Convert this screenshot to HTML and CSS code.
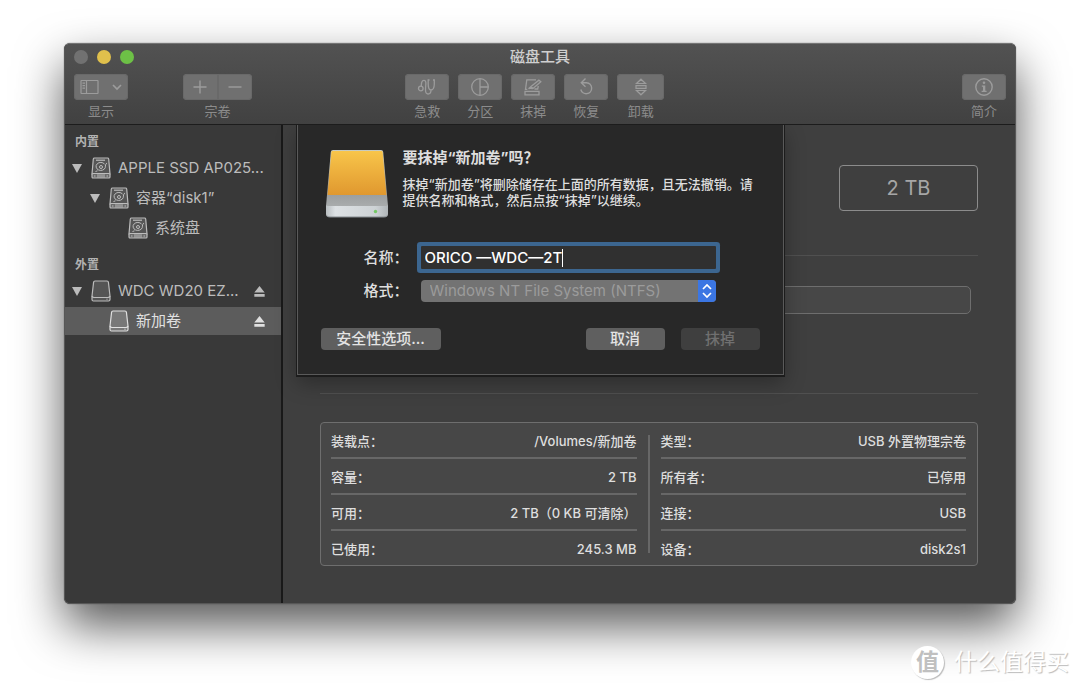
FILE: index.html
```html
<!DOCTYPE html>
<html lang="zh-CN">
<head>
<meta charset="utf-8">
<meta name="viewport" content="width=device-width, initial-scale=1">
<title>磁盘工具</title>
<link rel="stylesheet" href="styles.css">
</head>
<body>
<svg class="symbols" aria-hidden="true">
  <symbol id="internal-disk" viewBox="0 0 20 22">
    <path d="M3.500 1h13q1 0 1.200 1L19 17H1L2.300 2q.2-1 1.200-1z" fill="#565656" stroke="currentColor" stroke-width="1.200"/>
    <rect x="1" y="16.500" width="18" height="4.500" rx="1" fill="#6a6a6a" stroke="currentColor" stroke-width="1.200"/>
    <path d="M5 3.200h9" stroke="currentColor" stroke-width="1.200"/>
    <path d="M13.500 7a4.700 4 0 1 0 .8 3.500c.2-2 0-3.500 1.700-4.500M6.500 13.800l-2 .7" fill="none" stroke="currentColor"/>
    <circle cx="10" cy="10" r="1.500" fill="none" stroke="currentColor"/>
    <path d="M3 19h1.500M7 17.200v3.500M9 17.200v3.500M11 17.200v3.500M13 17.200v3.500M15.500 19h1.500" stroke="currentColor"/>
  </symbol>
  <symbol id="external-disk" viewBox="0 0 20 22">
    <path d="M4 1h12q1.200 0 1.400 1.200L19 16v3.500q0 1.500-1.500 1.500h-15Q1 21 1 19.500V16L2.600 2.200Q2.800 1 4 1z" fill="currentColor" fill-opacity=".22" stroke="currentColor" stroke-width="1.200"/>
    <path d="M1 16q.4 1.500 2 1.500h14q1.600 0 2-1.500" fill="none" stroke="currentColor" stroke-width="1.200"/>
    <circle cx="16" cy="19.200" r=".6" fill="currentColor"/>
  </symbol>
  <symbol id="eject" viewBox="0 0 10 10">
    <path d="M5 0l4.700 5.800H.3zM.3 7.300h9.400v2.400H.3z" fill="currentColor"/>
  </symbol>
  <symbol id="triangle" viewBox="0 0 10 9">
    <path d="M0 0h10L5 9z" fill="currentColor"/>
  </symbol>
</svg>

<div class="window">
  <header class="header">
    <div class="titlebar">
      <div class="lights">
        <button class="light light-close" aria-label="关闭"></button>
        <button class="light light-minimize" aria-label="最小化"></button>
        <button class="light light-zoom" aria-label="缩放"></button>
      </div>
      <h1 class="title">磁盘工具</h1>
    </div>
    <div class="toolbar">
      <div class="tool tool-view">
        <button class="tool-button" aria-labelledby="t-view">
          <svg width="42" height="18" viewBox="0 0 42 18"><g fill="none" stroke="currentColor" stroke-width="1.200"><rect x="1" y="2.500" width="17" height="13" rx=".5"/><path d="M6.500 2.500v13M2.500 5.200H5M2.500 7.700H5M2.500 10.200H5"/><path d="M33 7l4 4 4-4" stroke-width="1.700"/></g></svg>
        </button>
        <span class="tool-label" id="t-view">显示</span>
      </div>
      <div class="tool tool-volume">
        <div class="segments">
          <button class="tool-button" aria-label="添加宗卷"><svg width="14" height="14" viewBox="0 0 14 14"><path d="M7 .5v13M.5 7h13" stroke="currentColor" stroke-width="1.400"/></svg></button>
          <button class="tool-button" aria-label="移除宗卷"><svg width="14" height="14" viewBox="0 0 14 14"><path d="M.5 7h13" stroke="currentColor" stroke-width="1.400"/></svg></button>
        </div>
        <span class="tool-label">宗卷</span>
      </div>
      <div class="space-left"></div>
      <div class="tool-group">
        <div class="tool">
          <button class="tool-button" aria-labelledby="t-aid"><svg width="20" height="18" viewBox="0 0 20 18"><g fill="none" stroke="currentColor" stroke-width="1.300"><circle cx="3.800" cy="10.500" r="2.300"/><path d="M4.300 8.200C4.300 5 4.800 2.300 7 2.300S9 5 8.700 8c-.4 4-.6 8 2.300 8 2.500 0 3-1.500 3-4M12.500 2h-1.300v4c0 3.500 1 6 2.800 6s3.300-2.500 3.300-6V2H16"/></g></svg></button>
          <span class="tool-label" id="t-aid">急救</span>
        </div>
        <div class="tool">
          <button class="tool-button" aria-labelledby="t-part"><svg width="20" height="20" viewBox="0 0 20 20"><g fill="none" stroke="currentColor" stroke-width="1.300"><circle cx="10" cy="10" r="8.300"/><path d="M10 1.700v16.600M10 10h8.300"/></g></svg></button>
          <span class="tool-label" id="t-part">分区</span>
        </div>
        <div class="tool">
          <button class="tool-button" aria-labelledby="t-erase"><svg width="20" height="18" viewBox="0 0 20 18"><g fill="none" stroke="currentColor" stroke-width="1.300"><path d="M13 1.800H3.800l-1.300 9.500h1.800M2 13.300h14v3.500H2zM5.500 10.700c2.500-1 2.500.4 4.500-.2L17.800 3.700l-1.900-1.500L8 8.500zM8 8.500l2 2M11.500 11h3.200l.6-3"/></g></svg></button>
          <span class="tool-label" id="t-erase">抹掉</span>
        </div>
        <div class="tool">
          <button class="tool-button" aria-labelledby="t-restore"><svg width="18" height="20" viewBox="0 0 18 20"><path d="M8.500 1.500L4.300 5.700l4.200 4M4.300 5.700h5.200a5.500 5.500 0 1 1-5.700 6.800" fill="none" stroke="currentColor" stroke-width="1.400"/></svg></button>
          <span class="tool-label" id="t-restore">恢复</span>
        </div>
        <div class="tool tool-wide">
          <button class="tool-button" aria-labelledby="t-unmount"><svg width="14" height="18" viewBox="0 0 14 18"><g fill="none" stroke="currentColor" stroke-width="1.200"><path d="M7 1.200l4.500 4.300h-9zM7 16.800l4.500-4.300h-9zM2 7.700h10v2.600H2z"/></g></svg></button>
          <span class="tool-label" id="t-unmount">卸载</span>
        </div>
      </div>
      <div class="space-right"></div>
      <div class="tool">
        <button class="tool-button" aria-labelledby="t-info"><svg width="20" height="20" viewBox="0 0 20 20"><circle cx="10" cy="10" r="8.200" fill="none" stroke="currentColor" stroke-width="1.400"/><circle cx="10" cy="5.700" r="1.300" fill="currentColor"/><path d="M7.800 8.500h3.500v5.300h1.300V15H7.600v-1.200H9V9.700H7.800z" fill="currentColor"/></svg></button>
        <span class="tool-label" id="t-info">简介</span>
      </div>
    </div>
  </header>

  <div class="content">
    <nav class="sidebar">
      <h2 class="section">内置</h2>
      <div class="row">
        <svg class="arrow"><use href="#triangle"/></svg>
        <svg class="disk"><use href="#internal-disk"/></svg>
        <span class="name">APPLE SSD AP025...</span>
      </div>
      <div class="row row-child">
        <svg class="arrow"><use href="#triangle"/></svg>
        <svg class="disk"><use href="#internal-disk"/></svg>
        <span class="name">容器“disk1”</span>
      </div>
      <div class="row row-leaf">
        <svg class="disk"><use href="#internal-disk"/></svg>
        <span class="name">系统盘</span>
      </div>
      <h2 class="section section-next">外置</h2>
      <div class="row">
        <svg class="arrow"><use href="#triangle"/></svg>
        <svg class="disk"><use href="#external-disk"/></svg>
        <span class="name">WDC WD20 EZ...</span>
        <button class="eject" aria-label="推出 WDC WD20"><svg><use href="#eject"/></svg></button>
      </div>
      <div class="row row-volume row-selected">
        <svg class="disk"><use href="#external-disk"/></svg>
        <span class="name">新加卷</span>
        <button class="eject" aria-label="推出 新加卷"><svg><use href="#eject"/></svg></button>
      </div>
    </nav>

    <main class="main">
      <div class="summary"><div class="capacity">2 TB</div></div>
      <div class="usage"><div class="usage-bar"></div></div>
      <section class="info">
        <dl class="facts">
          <div class="fact"><dt>装载点：</dt><dd>/Volumes/新加卷</dd></div>
          <div class="fact"><dt>容量：</dt><dd>2 TB</dd></div>
          <div class="fact"><dt>可用：</dt><dd>2 TB（0 KB 可清除）</dd></div>
          <div class="fact"><dt>已使用：</dt><dd>245.3 MB</dd></div>
        </dl>
        <div class="divider"></div>
        <dl class="facts">
          <div class="fact"><dt>类型：</dt><dd>USB 外置物理宗卷</dd></div>
          <div class="fact"><dt>所有者：</dt><dd>已停用</dd></div>
          <div class="fact"><dt>连接：</dt><dd>USB</dd></div>
          <div class="fact"><dt>设备：</dt><dd>disk2s1</dd></div>
        </dl>
      </section>
    </main>

    <form class="sheet" role="dialog" aria-labelledby="sheet-title">
      <div class="message">
        <svg class="drive" width="64" height="70" viewBox="0 0 64 70" aria-hidden="true">
          <defs>
            <linearGradient id="orange" x2="0" y2="1"><stop stop-color="#f8c54a"/><stop offset="1" stop-color="#e0982f"/></linearGradient>
            <linearGradient id="silver" x2="0" y2="1"><stop stop-color="#c8cbc0"/><stop offset=".75" stop-color="#989b9c"/><stop offset="1" stop-color="#a9acad"/></linearGradient>
            <linearGradient id="front"><stop stop-color="#b9bec1"/><stop offset=".15" stop-color="#dde1e4"/><stop offset=".8" stop-color="#cdd2d5"/><stop offset="1" stop-color="#b0b5b8"/></linearGradient>
          </defs>
          <path d="M8 1h48q2 0 2.200 2L63 57H1L5.800 3Q6 1 8 1z" fill="url(#silver)"/>
          <path d="M7.500 2h49q1 0 1.100 1L61.500 46h-59L6.400 3q.1-1 1.100-1z" fill="url(#orange)"/>
          <path d="M1 56q0 1 2 1h58q2 0 2-1v9q0 3-3 3H4q-3 0-3-3z" fill="url(#front)"/>
          <path d="M2 67q1 1 3 1h54q2 0 3-1" fill="none" stroke="#858b8f"/>
          <circle cx="50.500" cy="62.500" r="1.700" fill="#75c965"/>
        </svg>
        <div class="copy">
          <h2 class="sheet-title" id="sheet-title">要抹掉“新加卷”吗？</h2>
          <p class="sheet-text">抹掉“新加卷”将删除储存在上面的所有数据，且无法撤销。请提供名称和格式，然后点按“抹掉”以继续。</p>
        </div>
      </div>
      <div class="fields">
        <label for="name">名称：</label>
        <div class="text-field"><input id="name" type="text" value="ORICO —WDC—2T"><span class="caret"></span></div>
        <label for="format">格式：</label>
        <div class="select-field">
          <select id="format" disabled><option>Windows NT File System (NTFS)</option></select>
          <span class="stepper"><svg width="12" height="16" viewBox="0 0 12 16"><path d="M2 6l4-4 4 4M2 10l4 4 4-4" fill="none" stroke="#fff" stroke-width="1.700"/></svg></span>
        </div>
      </div>
      <div class="actions">
        <button type="button" class="button button-options">安全性选项...</button>
        <button type="button" class="button button-cancel">取消</button>
        <button type="submit" class="button" disabled>抹掉</button>
      </div>
    </form>
  </div>
</div>

<div class="watermark"><span class="badge">值</span><span>什么值得买</span></div>
</body>
</html>
```
FILE: styles.css
```css
* { box-sizing: border-box; }

body {
  margin: 0;
  min-height: 100vh;
  padding: 43px 64px 85px;
  background: #fff;
  color: #dedede;
  font: 13px/18px Inter, "Noto Sans CJK SC", sans-serif;
}

h1, h2, p, dl, dd { margin: 0; }
button, input, select { font: inherit; color: inherit; padding: 0; margin: 0; border: 0; }
svg { display: block; }
.symbols { display: none; }

.window {
  border: 1px solid #575757;
  border-top-color: #757575;
  border-radius: 6px;
  background: #3f3f3f;
  box-shadow: 0 0 1px #333, 0 22px 48px rgba(0, 0, 0, .66);
}

/* Title bar and toolbar */
.header {
  padding: 0 9px 4px;
  border-bottom: 1px solid #1c1c1c;
  border-radius: 5px 5px 0 0;
  background: linear-gradient(#525252, #414141);
}
.titlebar { display: grid; grid-template-columns: 1fr auto 1fr; align-items: center; height: 26px; }
.lights { display: flex; gap: 9px; }
.light { width: 14px; height: 14px; border-radius: 50%; }
.light-close { background: #717171; }
.light-minimize { background: #e0c04c; }
.light-zoom { background: #6dc046; }
.title { font-size: 15px; font-weight: 500; line-height: 22px; color: #cfcfcf; }

.toolbar { display: flex; padding-top: 4px; color: #8c8c8c; }
.tool { display: flex; flex-direction: column; align-items: stretch; width: 44px; }
.tool-view { width: 54px; }
.tool-volume { width: 69px; margin-left: 55px; }
.tool-wide { width: 47px; }
.tool-group { display: flex; gap: 9px; }
.space-left { flex: 17; }
.space-right { flex: 33; }
.tool-button {
  display: flex;
  align-items: center;
  justify-content: center;
  height: 26px;
  border-radius: 4px;
  background: #707070;
  color: #9c9c9c;
  box-shadow: inset 0 0 0 1px #696969;
}
.segments { display: flex; }
.segments .tool-button { flex: 1; }
.segments .tool-button:first-child { border-radius: 4px 0 0 4px; }
.segments .tool-button:last-child { border-radius: 0 4px 4px 0; }
.tool-label { margin-top: 2px; text-align: center; }

/* Sidebar */
.content { display: flex; position: relative; }
.sidebar { width: 218px; flex: none; padding-top: 7px; border-right: 2px solid #191919; border-radius: 0 0 0 5px; background: #393939; color: #bcbcbc; }
.section { padding-left: 10px; margin-bottom: 2px; font-size: 12px; font-weight: 700; line-height: 20px; color: #b2b2b2; }
.section-next { margin-top: 13px; }
.row { display: flex; align-items: center; height: 28px; margin-bottom: 2px; padding: 0 16px 0 7px; font-size: 15px; }
.row-child { padding-left: 25px; }
.row-leaf { padding-left: 63px; }
.row-volume { padding-left: 44px; }
.row-selected { background: #5c5c5c; color: #e0e0e0; }
.arrow { width: 10px; height: 9px; margin-right: 9px; }
.disk { width: 20px; height: 22px; margin-right: 7px; flex: none; }
.name { flex: 1; white-space: nowrap; }
.eject { background: none; }
.eject svg { width: 11px; height: 11px; }

/* Volume details */
.main { flex: 1; padding: 40px 37px 37px; }
.summary { display: flex; justify-content: flex-end; padding-bottom: 44px; border-bottom: 1px solid #505050; }
.capacity {
  width: 139px;
  border: 1px solid #8c8c8c;
  border-radius: 4px;
  color: #a6a6a6;
  font-size: 20px;
  line-height: 44px;
  text-align: center;
}
.usage { padding: 30px 7px 79px; border-bottom: 1px solid #505050; }
.usage-bar { height: 28px; border: 1px solid #6e6e6e; border-radius: 5px; background: #474747; }
.info {
  display: flex;
  gap: 11px;
  margin-top: 28px;
  padding: 0 11px 0 10px;
  border: 1px solid #6e6e6e;
  border-radius: 4px;
  background: #474747;
  font-weight: 500;
}
.facts { flex: 1; }
.fact { display: flex; justify-content: space-between; padding: 9px 0 7px; border-bottom: 2px solid #676767; }
.fact:last-child { border-bottom: 0; }
.divider { width: 2px; margin: 12px 0; background: #676767; }

/* Erase sheet */
.sheet {
  position: absolute;
  top: 0;
  left: 0;
  right: 0;
  width: 487px;
  margin: 0 auto;
  padding: 24px 23px;
  border: 1px solid #5a5a5a;
  border-top: 0;
  background: #282828;
  box-shadow: 0 1px 0 1px #1c1c1c, 0 8px 20px rgba(0, 0, 0, .3);
  clip-path: inset(0 -40px -40px);
}
.message { display: flex; gap: 14px; padding-left: 4px; }
.drive { flex: none; }
.sheet-title { font-size: 15px; font-weight: 700; line-height: 18px; }
.sheet-text { margin-top: 9px; font-weight: 500; line-height: 16px; }
.fields {
  display: grid;
  grid-template-columns: 88px 1fr;
  gap: 10px 12px;
  align-items: center;
  margin-top: 27px;
  padding-right: 44px;
  font-size: 15px;
  font-weight: 500;
  line-height: 23px;
}
.fields label { text-align: right; }
.text-field {
  display: flex;
  align-items: center;
  height: 23px;
  padding-left: 4px;
  background: #303030;
  box-shadow: 0 0 0 4px #3c6690;
  border-radius: 1px;
}
.text-field input { field-sizing: content; background: none; color: #fff; outline: 0; }
.caret { width: 1px; height: 18px; background: #fff; }
.select-field { display: flex; height: 22px; border-radius: 4px; overflow: hidden; background: #737373; }
.select-field select { flex: 1; appearance: none; padding-left: 9px; background: none; color: #9b9b9b; opacity: 1; font-weight: 400; line-height: 22px; }
.stepper { display: flex; align-items: center; justify-content: center; width: 18px; background: #3b76e3; }
.actions { display: flex; gap: 16px; margin-top: 26px; }
.button { width: 79px; height: 22px; border-radius: 4px; background: #5f5f5f; color: #e4e4e4; font-size: 15px; font-weight: 500; line-height: 22px; }
.button:disabled { background: #3f3f3f; color: #707070; }
.button-options { width: 120px; margin-right: auto; }

.watermark {
  position: absolute;
  right: 11px;
  bottom: 10px;
  display: flex;
  align-items: center;
  gap: 10px;
  color: #fff;
  font-size: 23px;
  line-height: 34px;
  text-shadow: 1px 1px 1px #bbb;
}
.badge {
  width: 33px;
  height: 33px;
  border-radius: 50%;
  background: #fff;
  box-shadow: 1px 1px 1px #bbb;
  color: #c0c0c0;
  font-weight: 700;
  line-height: 32px;
  text-align: center;
  text-shadow: none;
}
```
